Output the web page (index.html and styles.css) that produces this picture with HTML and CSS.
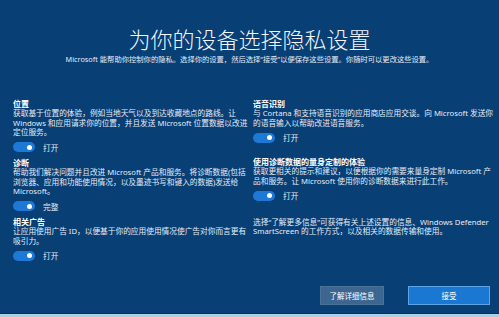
FILE: index.html
```html
<!DOCTYPE html>
<html lang="zh-CN">
  <head>
    <meta charset="UTF-8" />
    <meta name="viewport" content="width=device-width, initial-scale=1.0" />
    <title>为你的设备选择隐私设置</title>
    <link rel="stylesheet" href="styles.css">
  </head>
  <body>
    <main class="page">
      <header class="intro">
        <h1 class="title">为你的设备选择隐私设置</h1>
        <p class="subtitle">
          Microsoft 能帮助你控制你的隐私。选择你的设置，然后选择“接受”以便保存这些设置。你随时可以更改这些设置。
        </p>
      </header>

      <div class="columns">
        <section class="column column-left">
          <div class="setting">
            <h2>位置</h2>
            <p>获取基于位置的体验，例如当地天气以及到达收藏地点的路线。让 Windows 和应用请求你的位置，并且发送 Microsoft 位置数据以改进定位服务。</p>
            <div class="switch-row">
              <span class="switch"></span>
              <span class="switch-label">打开</span>
            </div>
          </div>

          <div class="setting">
            <h2>诊断</h2>
            <p>帮助我们解决问题并且改进 Microsoft 产品和服务。将诊断数据(包括浏览器、应用和功能使用情况，以及墨迹书写和键入的数据)发送给 Microsoft。</p>
            <div class="switch-row">
              <span class="switch"></span>
              <span class="switch-label">完整</span>
            </div>
          </div>

          <div class="setting">
            <h2>相关广告</h2>
            <p>让应用使用广告 ID，以便基于你的应用使用情况使广告对你而言更有吸引力。</p>
            <div class="switch-row">
              <span class="switch"></span>
              <span class="switch-label">打开</span>
            </div>
          </div>
        </section>

        <section class="column column-right">
          <div class="setting">
            <h2>语音识别</h2>
            <p>与 Cortana 和支持语音识别的应用商店应用交谈。向 Microsoft 发送你的语音输入以帮助改进语音服务。</p>
            <div class="switch-row">
              <span class="switch"></span>
              <span class="switch-label">打开</span>
            </div>
          </div>

          <div class="setting">
            <h2>使用诊断数据的量身定制的体验</h2>
            <p>获取更相关的提示和建议，以便根据你的需要来量身定制 Microsoft 产品和服务。让 Microsoft 使用你的诊断数据来进行此工作。</p>
            <div class="switch-row">
              <span class="switch"></span>
              <span class="switch-label">打开</span>
            </div>
          </div>

          <p class="note">选择“了解更多信息”可获得有关上述设置的信息、Windows Defender SmartScreen 的工作方式，以及相关的数据传输和使用。</p>
        </section>
      </div>

      <footer class="actions">
        <button class="btn btn-secondary">了解详细信息</button>
        <button class="btn btn-primary">接受</button>
      </footer>
    </main>
    <div class="taskbar"></div>
  </body>
</html>
```

FILE: styles.css
```css
* {
  margin: 0;
  padding: 0;
  box-sizing: border-box;
}

html,
body {
  height: 100%;
}

body {
  display: flex;
  flex-direction: column;
  background-color: #083f75;
  color: #e4ecf5;
  font-family: "Noto Sans", "Noto Sans CJK SC", sans-serif;
  overflow: hidden;
}

.page {
  flex: 1;
  display: flex;
  flex-direction: column;
}

.intro {
  text-align: center;
  padding-top: 26px;
}

.title {
  font-size: 22px;
  line-height: 26px;
  font-weight: 300;
  color: #f2f6fb;
}

.subtitle {
  margin-top: 2px;
  font-size: 7.3px;
  line-height: 10px;
}

.columns {
  display: flex;
  gap: 4px;
  padding: 35px 0 0 13px;
}

.column {
  display: flex;
  flex-direction: column;
  gap: 6px;
}

.column-left {
  width: 236px;
}

.column-right {
  width: 242px;
  gap: 14.5px;
}

.setting h2 {
  font-size: 8px;
  line-height: 10px;
  font-weight: 700;
  color: #ffffff;
}

.setting p,
.note {
  font-size: 7.7px;
  line-height: 9.5px;
}

.note {
  margin-top: 2.5px;
}

.switch-row {
  display: flex;
  align-items: center;
  gap: 8px;
  height: 10px;
  margin-top: 4.5px;
  font-size: 7.7px;
}

.switch {
  position: relative;
  width: 22px;
  height: 10px;
  border-radius: 5px;
  background-color: #1d78d6;
}

.switch::after {
  content: "";
  position: absolute;
  top: 2.5px;
  right: 3px;
  width: 5px;
  height: 5px;
  border-radius: 50%;
  background-color: #ffffff;
}

.actions {
  margin-top: auto;
  display: flex;
  justify-content: flex-end;
  gap: 24px;
  padding: 0 9px 8px 0;
}

.btn {
  height: 19px;
  font-family: inherit;
  font-size: 7.5px;
  color: #ffffff;
  border: 1px solid transparent;
  cursor: pointer;
}

.btn-secondary {
  width: 64px;
  background-color: #3c6590;
  border-color: #4a7299;
}

.btn-primary {
  width: 82px;
  background-color: #1a78d2;
  border-color: #5ea3e4;
}

.taskbar {
  height: 4px;
  background-color: #a9d0e4;
  border-top: 1px solid #0c2f52;
}
```
